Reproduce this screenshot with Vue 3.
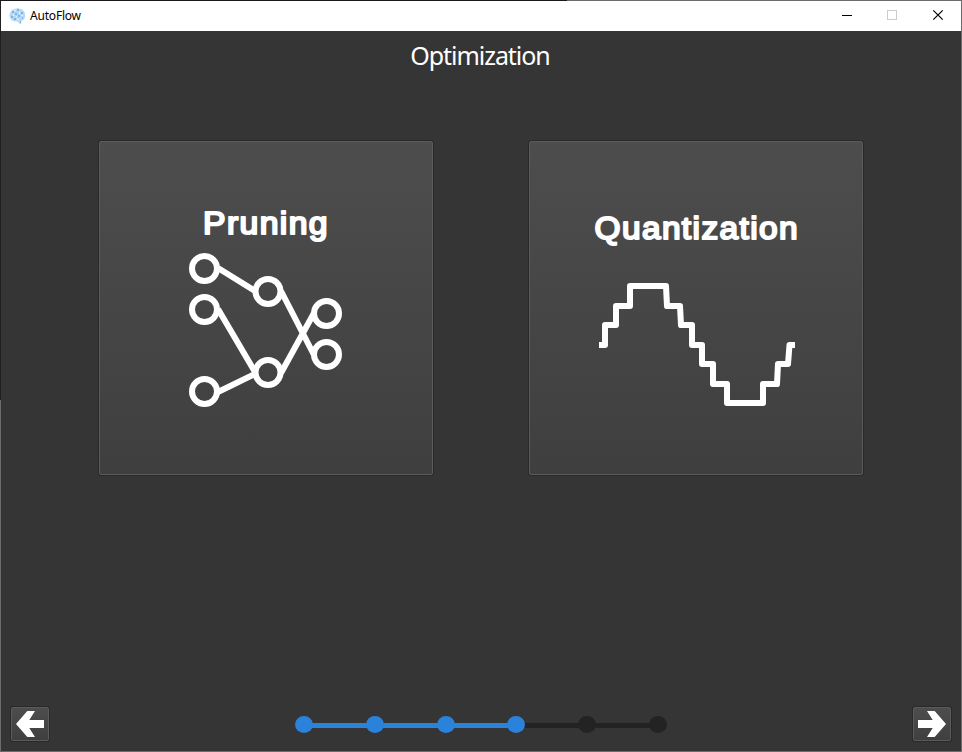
<script setup>
const steps = [true, true, true, true, false, false]
const nodes = [
  [204.5, 268.5], [204.5, 309.5], [204.5, 391.5],
  [268, 291.5], [268, 372.5],
  [326.5, 313.5], [326.5, 354.5],
]
</script>

<template>
  <div class="window">
    <header class="titlebar">
      <svg class="logo" width="17" height="17" viewBox="0 0 17 17">
        <path d="M1 5L3 2 6 .8 9 .3 13 1.500 15.500 4 16.300 8 15 11.500 12.500 13 12 16.300 10 15.500 9 13.500 4.500 13.200 2 11.500 .3 8Z" fill="#b5d8f5" />
        <path d="M3 3h2v2H3zM8 1h2v2H8zM12 4h2v2h-2zM6 5h2v2H6zM2 8h2v2H2zM9 7h2v2H9zM5 10h2v2H5zM13 9h1v2h-1zM11 13h1v2h-1z" fill="#7fb5e6" />
        <path d="M5 2h2v1H5zM10 4h1v2h-1zM4 6h1v2H4zM7 8h1v1H7zM12 7h2v1h-2zM8 11h2v1H8z" fill="#e4f2fc" />
      </svg>
      <span class="app-name">AutoFlow</span>
      <div class="controls">
        <svg width="46" height="30" viewBox="0 0 46 30"><path d="M19 14.500h10" stroke="#000" /></svg>
        <svg width="46" height="30" viewBox="0 0 46 30"><rect x="18.500" y="9.500" width="9" height="9" fill="none" stroke="#ccc" /></svg>
        <svg width="46" height="30" viewBox="0 0 46 30"><path d="M18.300 9.300l9.400 9.400M27.700 9.300l-9.400 9.400" stroke="#000" stroke-width="1.2" /></svg>
      </div>
    </header>

    <main class="content">
      <h1>Optimization</h1>

      <div class="cards">
        <button class="card">
          <svg width="332" height="332" viewBox="100 142 332 332">
            <text x="203" y="233.500" textLength="126" lengthAdjust="spacingAndGlyphs">Pruning</text>
            <g class="strokes">
              <path d="M218 268L255 291M218 309L255 372M218 392L255 374M281 291L314 355M281 373L314 313" />
              <circle v-for="([x, y], i) in nodes" :key="i" :cx="x" :cy="y" r="12.5" />
            </g>
          </svg>
        </button>
        <button class="card">
          <svg width="332" height="332" viewBox="530 142 332 332">
            <text x="594.500" y="238.500" textLength="204.500" lengthAdjust="spacingAndGlyphs">Quantization</text>
            <path class="strokes" d="M599 345H605V325H616V306H630V286H666L667 306H680L681 325H692V345H702V364H713V384H727V403H763V384H777L778 364H788L789.500 345H795" />
          </svg>
        </button>
      </div>

      <footer>
        <button class="nav">
          <svg width="36" height="32" viewBox="12 708 36 32"><path d="M16 724L27.300 711H35L29.300 720H44V728H29.300L35 737H27.300Z" fill="#fff" /></svg>
        </button>
        <div class="progress">
          <template v-for="(done, i) in steps" :key="i">
            <span v-if="i" class="bar" :class="{ done }"></span>
            <span class="dot" :class="{ done }"></span>
          </template>
        </div>
        <button class="nav">
          <svg width="36" height="32" viewBox="914 708 36 32"><path d="M946 724L934.700 711H927L932.700 720H918V728H932.700L927 737H934.700Z" fill="#fff" /></svg>
        </button>
      </footer>
    </main>
  </div>
</template>

<style>
body { margin: 0; overflow: hidden; }
</style>

<style scoped>
.window {
  box-sizing: border-box;
  width: 962px;
  height: 752px;
  padding: 1px;
  display: flex;
  flex-direction: column;
  background:
    linear-gradient(90deg, #1d191b 567px, #6c6c6c 567px) 0 0 / 100% 1px no-repeat,
    linear-gradient(#202020 400px, #6c6c6c 400px) 0 0 / 1px 100% no-repeat,
    #6c6c6c;
}
.titlebar {
  height: 30px;
  display: flex;
  align-items: center;
  background: #fff;
  flex: none;
}
.logo { margin-left: 8px; }
.app-name {
  margin-left: 4px;
  font: 12px/16px "Noto Sans", sans-serif;
  letter-spacing: -0.2px;
  color: #000;
}
.controls { margin-left: auto; display: flex; }
.controls svg { display: block; }
.content {
  flex: 1;
  display: flex;
  flex-direction: column;
  background: #353535;
}
h1 {
  margin: 7px 0 0;
  padding-right: 2px;
  height: 34px;
  text-align: center;
  font: 400 25px/34px "Noto Sans", sans-serif;
  letter-spacing: -1.05px;
  color: #fff;
}
.cards {
  display: flex;
  justify-content: center;
  gap: 96px;
  margin-top: 69px;
}
button {
  box-sizing: border-box;
  padding: 0;
  border: 1px solid #5b5b5b;
  border-radius: 2px;
  background: linear-gradient(#4d4d4d, #3f3f3f);
  box-shadow: 0 0 0 1px #292929;
}
button svg { display: block; }
.card { width: 334px; height: 334px; }
.card text {
  font: 400 31px "Liberation Sans", sans-serif;
  letter-spacing: 1.3px;
  fill: #fff;
  stroke: #fff;
  stroke-width: 2;
  stroke-linejoin: round;
}
.strokes {
  fill: none;
  stroke: #fff;
  stroke-width: 6;
  stroke-linejoin: round;
}
footer {
  margin-top: auto;
  padding: 0 10px 10px;
  display: flex;
  justify-content: space-between;
  align-items: center;
}
.nav { width: 38px; height: 34px; }
.progress { display: flex; align-items: center; height: 18px; }
.dot {
  width: 18px;
  height: 17px;
  border-radius: 50%;
  background: #232323;
}
.bar {
  width: 56.800px;
  height: 5px;
  margin: 2px -2px 0;
  background: #232323;
}
.done { background: #2a82da; }
.dot.done { position: relative; }
</style>
